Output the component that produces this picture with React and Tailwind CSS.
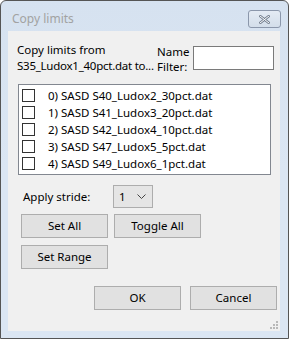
const files = [
  "0) SASD S40_Ludox2_30pct.dat",
  "1) SASD S41_Ludox3_20pct.dat",
  "2) SASD S42_Ludox4_10pct.dat",
  "3) SASD S47_Ludox5_5pct.dat",
  "4) SASD S49_Ludox6_1pct.dat",
];

const Btn = ({ children, className = "" }) => (
  <div
    className={`flex items-center justify-center border border-[#adadad] bg-[#e1e1e1] text-black ${className}`}
  >
    {children}
  </div>
);

export default function App() {
  return (
    <div
      className="w-[289px] h-[339px] bg-white text-[11.5px] leading-none"
      style={{ fontFamily: '"Noto Sans", "Open Sans", sans-serif' }}
    >
      <div className="flex h-full w-full flex-col rounded-t-[6px] border border-[#555555] bg-gradient-to-b from-[#d6e2f0] via-[#dbe6f3] to-[#dbe6f3] pl-[7px] pr-[8px] pb-[7px]">
        {/* title bar */}
        <div className="flex h-[30px] shrink-0 items-start">
          <div className="mt-[12px] ml-[4px] text-[12px] text-[#a2a2a2]">Copy limits</div>
          <div className="ml-auto mt-[9px] -mr-[1px] flex h-[18px] w-[33px] items-center justify-center rounded-[3px] border border-[#8b97ab] bg-gradient-to-b from-[#e4ebf4] to-[#d3deea]">
            <svg width="11" height="9" viewBox="0 0 11 9">
              <path d="M1 1 L10 8 M10 1 L1 8" stroke="#6f7b8c" strokeWidth="2.6" strokeLinecap="square" />
              <path d="M1 1 L10 8 M10 1 L1 8" stroke="#ffffff" strokeWidth="1" strokeLinecap="square" />
            </svg>
          </div>
        </div>

        {/* client area */}
        <div className="relative flex flex-1 flex-col bg-[#f0f0f0] pl-[9px]">
          <div className="mt-[11px] flex h-[32px] items-start">
            <div className="w-[140px] leading-[16px]">
              <div>Copy limits from</div>
              <div className="whitespace-nowrap tracking-[-0.25px]">S35_Ludox1_40pct.dat to...</div>
            </div>
            <div className="mt-[2px] leading-[15px]">
              <div>Name</div>
              <div>Filter:</div>
            </div>
            <div className="ml-[4px] mt-[4px] h-[24px] w-[81px] border border-[#7a7a7a] bg-white" />
          </div>

          <div className="mt-[10px] ml-[1px] flex h-[91px] w-[253px] shrink-0 flex-col border border-[#828790] bg-white pt-[2px]">
            {files.map((f) => (
              <div key={f} className="flex h-[17px] items-center">
                <div className="ml-[3px] h-[13px] w-[13px] border border-[#333333] bg-white" />
                <div className="ml-[13px] whitespace-nowrap">{f}</div>
              </div>
            ))}
          </div>

          <div className="mt-[10px] flex items-center">
            <div className="ml-[6px] w-[90px]">Apply stride:</div>
            <div className="flex h-[23px] w-[40px] items-center border border-[#adadad] bg-[#e5e5e5] pl-[5px]">
              <span>1</span>
              <svg className="ml-auto mr-[6px]" width="9" height="5" viewBox="0 0 9 5">
                <path d="M0.5 0.5 L4.5 4.5 L8.5 0.5" fill="none" stroke="#444" strokeWidth="1" />
              </svg>
            </div>
          </div>

          <div className="mt-[6px] ml-[4px] flex gap-[6px]">
            <Btn className="h-[24px] w-[87px]">Set All</Btn>
            <Btn className="h-[24px] w-[87px]">Toggle All</Btn>
          </div>
          <div className="mt-[7px] ml-[4px] flex">
            <Btn className="h-[24px] w-[87px]">Set Range</Btn>
          </div>

          <div className="mt-[17px] ml-[77px] flex gap-[9px]">
            <Btn className="h-[24px] w-[87px]">OK</Btn>
            <Btn className="h-[24px] w-[87px]">Cancel</Btn>
          </div>

          <svg className="absolute right-[2px] bottom-[2px]" width="8" height="8" viewBox="0 0 8 8">
            <rect x="6" y="0" width="2" height="2" fill="#b8b8b8" />
            <rect x="3" y="3" width="2" height="2" fill="#b8b8b8" />
            <rect x="6" y="3" width="2" height="2" fill="#b8b8b8" />
            <rect x="0" y="6" width="2" height="2" fill="#b8b8b8" />
            <rect x="3" y="6" width="2" height="2" fill="#b8b8b8" />
            <rect x="6" y="6" width="2" height="2" fill="#b8b8b8" />
          </svg>
        </div>
      </div>
    </div>
  );
}
